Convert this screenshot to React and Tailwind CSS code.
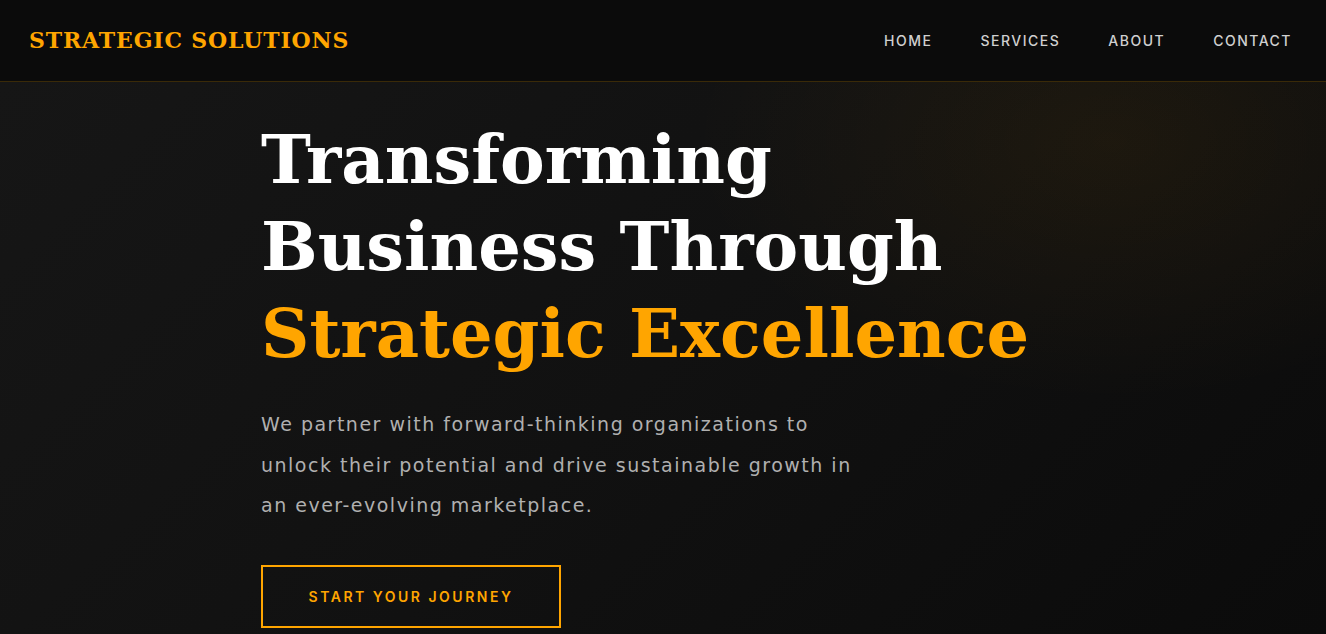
import React from "react";

const serif = { fontFamily: '"DejaVu Serif", "Liberation Serif", serif' };

export default function App() {
    const links = ["HOME", "SERVICES", "ABOUT", "CONTACT"];

    return (
        <div className="min-h-screen bg-[#0a0a0a] font-['Inter',sans-serif]">
            {/* HEADER */}
            <header className="h-[82px] flex items-center justify-between pl-[29px] pr-[34px] bg-[#0b0b0b] border-b border-[#3a2a08]">
                <div className="text-[22px] font-bold tracking-[0.85px] text-[#ffa500]" style={serif}>
                    STRATEGIC SOLUTIONS
                </div>
                <nav className="flex gap-[48px]">
                    {links.map(l => (
                        <a key={l} className="text-[14px] font-medium tracking-[1.5px] text-[#d0d0d0]">{l}</a>
                    ))}
                </nav>
            </header>

            {/* HERO */}
            <section className="relative h-[552px] overflow-hidden bg-[linear-gradient(135deg,#161616_0%,#111111_50%,#0b0b0b_100%)]">
                <div className="absolute inset-0 bg-[radial-gradient(ellipse_420px_260px_at_1110px_60px,rgba(255,165,0,0.06),transparent)]" />
                <div className="relative max-w-[804px] mx-auto pt-[34px]">
                    <h1 className="text-[67px] leading-[87px] font-bold text-white whitespace-nowrap" style={serif}>
                        Transforming<br />
                        Business Through<br />
                        <span className="text-[#ffa500]">Strategic Excellence</span>
                    </h1>
                    <p className="mt-[27px] max-w-[620px] text-[19px] leading-[40.5px] tracking-[1.5px] text-[#b0b0b0] font-['DejaVu_Sans',sans-serif]">
                        We partner with forward-thinking organizations to unlock their potential and drive sustainable growth in an ever-evolving marketplace.
                    </p>
                    <button className="mt-[39px] w-[300px] h-[63px] border-2 border-[#ffa500] text-[#ffa500] text-[14px] font-semibold tracking-[2.5px]">
                        START YOUR JOURNEY
                    </button>
                </div>
            </section>
        </div>
    );
}
